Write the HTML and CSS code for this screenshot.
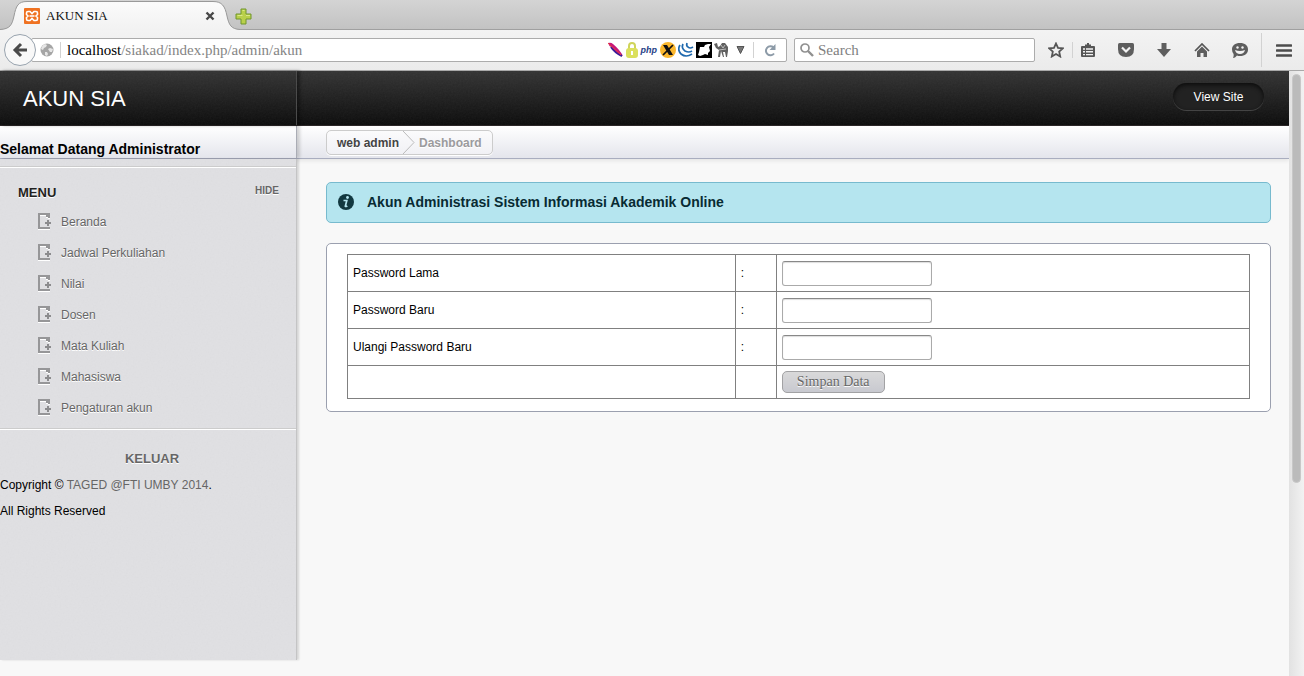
FILE: index.html
```
<!DOCTYPE html>
<html lang="id">
<head>
<meta charset="utf-8">
<title>AKUN SIA</title>
<link rel="stylesheet" href="styles.css">
</head>
<body>
<svg class="defs" width="0" height="0" aria-hidden="true">
  <symbol id="page-add" viewBox="0 0 14 17">
    <path d="M0 1h12v5h-2V5H8V3H2v12h10v2H0z" fill="#fff"/>
    <path d="M0 0h12v5h-2V4H8V2H2v12h10v2H0z" fill="#969698"/>
    <path d="M9 7h2v2h2v2h-2v2H9v-2H7V9h2z" fill="#8c8c8e"/>
  </symbol>
</svg>

<div class="tabstrip">
  <div class="tab">
    <svg class="tab-shape" viewBox="0 0 240 30" preserveAspectRatio="none" aria-hidden="true">
      <defs><linearGradient id="tabfill" x1="0" y1="0" x2="0" y2="1"><stop offset="0" stop-color="#fbfbfb"/><stop offset="1" stop-color="#f2f2f2"/></linearGradient></defs>
      <path d="M0 29.500C10 29 12 25 14 16C16 6 18 1.500 27 1.500H213C222 1.500 225 6 227 16C229 25 231 29 240 29.500V30H0z" fill="url(#tabfill)"/>
      <path d="M0 29.500C10 29 12 25 14 16C16 6 18 1.500 27 1.500H213C222 1.500 225 6 227 16C229 25 231 29 240 29.500" fill="none" stroke="#999"/>
    </svg>
    <svg class="favicon" width="16" height="16" viewBox="0 0 16 16" aria-hidden="true">
      <rect width="16" height="16" rx="1" fill="#ef7222"/>
      <path d="M4 3.500h2l2 2 2-2h2q1.500 0 1.500 1.500v1.500L12 8l1.500 1.500V11q0 1.500-1.500 1.500h-2l-2-2-2 2H4Q2.500 12.500 2.500 11V9.500L4 8 2.500 6.500V5Q2.500 3.500 4 3.500z" fill="none" stroke="#fff" stroke-width="1.600"/>
      <path d="M5.500 8h5" stroke="#fff" stroke-width="1.600"/>
    </svg>
    <span class="tab-title">AKUN SIA</span>
    <button class="bare" aria-label="Close tab"><svg width="10" height="10" viewBox="0 0 10 10"><path d="M1.500 1.500l7 7m0-7l-7 7" stroke="#484848" stroke-width="2.400"/></svg></button>
  </div>
  <button class="bare" aria-label="New tab"><svg width="17" height="17" viewBox="0 0 17 17"><path d="M6 1h5v5h5v5h-5v5H6v-5H1V6h5z" fill="#b9d04a" stroke="#71962c"/><path d="M7.500 2.500h2M2.500 7.500h5M11 7.500h4" stroke="#dbe88a"/></svg></button>
</div>

<div class="toolbar">
  <button class="bare back" aria-label="Back"><svg width="16" height="16" viewBox="0 0 16 16"><path d="M9 2L3 8l6 6M3.500 8H15" fill="none" stroke="#4a4a4a" stroke-width="3"/></svg></button>
  <div class="urlbar">
    <svg width="14" height="14" viewBox="0 0 14 14" aria-hidden="true"><circle cx="7" cy="7" r="6.500" fill="#a5a5a5"/><path d="M1 6q1-4 4-5l2 1-1 2-2 1-1 2zM8 6l2-1 3 1-1 3-2 0zM5 9l2 0 1 2-1 2-2-1z" fill="#e6e6e6"/></svg>
    <span class="divider"></span>
    <span class="address"><b>localhost</b>/siakad/index.php/admin/akun</span>
    <span class="addons">
      <svg width="16" height="16" viewBox="0 0 16 16" aria-hidden="true"><path d="M0 1q3-1 5 1 7 6 10 12-8-3-12-9Q1 4 0 1z" fill="#c9177a"/><path d="M3 5q4 6 11 9" stroke="#3b1b98" stroke-width="2" fill="none"/><path d="M0 1l13 12" stroke="#e6403c"/></svg>
      <svg width="12" height="16" viewBox="0 0 12 16" aria-hidden="true"><path d="M3 8V4a3 3 0 0 1 6 0v4" fill="none" stroke="#cfd45b" stroke-width="2"/><rect y="6" width="12" height="10" rx="3" fill="#dbe05d"/><path d="M5 9h2v4H5z" fill="#fff"/></svg>
      <span class="php">php</span>
      <svg width="16" height="16" viewBox="0 0 16 16" aria-hidden="true"><circle cx="8" cy="8" r="8" fill="#fbb72d"/><path d="M3 3h4l6 10H9z" fill="#111"/><path d="M13 3L3 13" stroke="#111" stroke-width="1.700"/></svg>
      <svg width="16" height="16" viewBox="0 0 16 16" fill="none" stroke="#1f69ae" stroke-width="1.700" aria-hidden="true"><path d="M2 3q-3 5 1 9 5 4 11 0"/><path d="M5 2q-2 4 2 7 4 2 7 0"/><path d="M9 1q-1 3 1 4 2 2 5 0"/></svg>
      <svg width="16" height="16" viewBox="0 0 16 16" aria-hidden="true"><path d="M0 0h16v16H0z" fill="#000"/><path d="M4 5h4l1-2 3-1h3l-2 3 1 4-2 2v2l-3-1-2 1-3 1-2-1 1-3z" fill="#fff"/></svg>
      <svg width="15" height="16" viewBox="0 0 15 16" aria-hidden="true"><path d="M0 2l3-1 1 4 2-1 2-3 3 0 3 4v4l-1 6h-1l-1-5-2 0 1 5H9L7 9 6 15H4l1-7-3-2-1-2z" fill="#606060"/><path d="M7 3l2 3 2-3M5 8l7-1" stroke="#bbb" fill="none"/></svg>
      <svg width="9" height="8" viewBox="0 0 9 8" aria-hidden="true"><path d="M1 .5h7L4.500 7.500z" fill="#777" stroke="#555"/></svg>
    </span>
    <span class="divider"></span>
    <button class="bare reload" aria-label="Reload"><svg width="12" height="13" viewBox="0 0 12 13"><path d="M9.500 3.500A4.500 4.500 0 1 0 10 9.500" fill="none" stroke="#8d9ba8" stroke-width="2"/><path d="M11.500 0v6h-6z" fill="#8d9ba8"/></svg></button>
  </div>
  <label class="search">
    <svg width="14" height="14" viewBox="0 0 14 14" aria-hidden="true"><circle cx="5" cy="5" r="4" fill="none" stroke="#909090" stroke-width="1.700"/><path d="M8 8l5 5" stroke="#909090" stroke-width="2.400"/></svg>
    <input type="text" placeholder="Search" aria-label="Search">
  </label>
  <div class="tools">
    <button class="bare" aria-label="Bookmark"><svg width="16" height="16" viewBox="0 0 16 16"><path d="M8 1.500l2 4.400 4.800.5-3.600 3.200 1 4.900L8 12l-4.200 2.500 1-4.900L1.200 6.400 6 5.900z" fill="none" stroke="#555" stroke-width="1.800"/></svg></button>
    <span class="divider"></span>
    <button class="bare list" aria-label="Bookmarks list"><svg width="14" height="15" viewBox="0 0 14 15"><path d="M1 3h3V1.500h2V0h2v1.500h2V3h3q1 0 1 1v9q0 1-1 1H1q-1 0-1-1V4q0-1 1-1z" fill="#565656"/><path d="M2 6h2m1 0h7M2 8.800h2m1 0h7M2 11.600h2m1 0h7" stroke="#f2f2f2" stroke-width="1.400"/></svg></button>
    <button class="bare wide" aria-label="Pocket"><svg width="16" height="14" viewBox="0 0 16 14"><path d="M1.500 0h13Q16 0 16 1.500V6q0 8-8 8T0 6V1.500Q0 0 1.500 0z" fill="#5e5e5e"/><path d="M4 4.500l4 4 4-4" fill="none" stroke="#f4f4f4" stroke-width="2.200"/></svg></button>
    <button class="bare wide" aria-label="Downloads"><svg width="14" height="14" viewBox="0 0 14 14"><path d="M4.500 0h5v6H14l-7 8-7-8h4.500z" fill="#5e5e5e"/></svg></button>
    <button class="bare wide" aria-label="Home"><svg width="16" height="14" viewBox="0 0 16 14"><path d="M1 8l7-7 7 7" fill="none" stroke="#555" stroke-width="1.700"/><path d="M3 8.500l5-5 5 5V14H9.500v-4h-3v4H3z" fill="#5e5e5e"/></svg></button>
    <button class="bare wide" aria-label="Chat"><svg width="16" height="15" viewBox="0 0 16 15"><path d="M8 0c5 0 8 2.600 8 6.500S13 13 8 13q-2 0-3-.5Q3 15 1 15q1-2 .6-4Q0 9 0 6.500C0 2.600 3 0 8 0z" fill="#5e5e5e"/><circle cx="5.500" cy="4.500" r="1.200" fill="#f2f2f2"/><circle cx="10.500" cy="4.500" r="1.200" fill="#f2f2f2"/><path d="M3 7q5 2 10 0-1 4-5 4T3 7z" fill="#f2f2f2"/></svg></button>
    <span class="divider tall"></span>
    <button class="bare" aria-label="Menu"><svg width="16" height="13" viewBox="0 0 16 13"><path d="M1 1.500h14M1 6.500h14M1 11.500h14" stroke="#4c4c4c" stroke-width="2.600" stroke-linecap="round"/></svg></button>
  </div>
</div>

<div class="viewport">
  <div class="page">
    <header class="header">
      <h1 class="site-title">AKUN SIA</h1>
      <a class="view-site" href="#">View Site</a>
    </header>
    <div class="subbar">
      <div class="welcome">Selamat Datang Administrator</div>
      <nav class="breadcrumbs" aria-label="Breadcrumb">
        <a href="#">web admin</a>
        <svg width="12" height="23" viewBox="0 0 12 23" aria-hidden="true"><path d="M0 0l11 11.500L0 23" fill="none" stroke="#bbb"/></svg>
        <span>Dashboard</span>
      </nav>
    </div>
    <div class="columns">
      <aside class="sidebar">
        <div class="menu">
          <div class="menu-head"><h3>MENU</h3><a href="#">HIDE</a></div>
          <ul>
            <li><svg width="14" height="17"><use href="#page-add"/></svg><a href="#">Beranda</a></li>
            <li><svg width="14" height="17"><use href="#page-add"/></svg><a href="#">Jadwal Perkuliahan</a></li>
            <li><svg width="14" height="17"><use href="#page-add"/></svg><a href="#">Nilai</a></li>
            <li><svg width="14" height="17"><use href="#page-add"/></svg><a href="#">Dosen</a></li>
            <li><svg width="14" height="17"><use href="#page-add"/></svg><a href="#">Mata Kuliah</a></li>
            <li><svg width="14" height="17"><use href="#page-add"/></svg><a href="#">Mahasiswa</a></li>
            <li><svg width="14" height="17"><use href="#page-add"/></svg><a href="#">Pengaturan akun</a></li>
          </ul>
        </div>
        <footer>
          <a class="logout" href="#">KELUAR</a>
          <p>Copyright © <a href="#">TAGED @FTI UMBY 2014</a>.</p>
          <p>All Rights Reserved</p>
        </footer>
      </aside>
      <main class="main">
        <h4 class="alert">
          <svg width="16" height="16" viewBox="0 0 16 16" aria-hidden="true"><circle cx="8" cy="8" r="8" fill="#123840"/><circle cx="9.500" cy="3.500" r="1.400" fill="#b5e5ef"/><path d="M5.500 6.500h3.300L7.300 12.200q.6.800 2-.4" fill="none" stroke="#b5e5ef" stroke-width="1.700"/></svg>
          Akun Administrasi Sistem Informasi Akademik Online
        </h4>
        <form class="module">
          <table>
            <colgroup><col class="col-label"><col class="col-colon"><col></colgroup>
            <tr><td><label for="lama">Password Lama</label></td><td>:</td><td><input type="password" id="lama"></td></tr>
            <tr><td><label for="baru">Password Baru</label></td><td>:</td><td><input type="password" id="baru"></td></tr>
            <tr><td><label for="ulangi">Ulangi Password Baru</label></td><td>:</td><td><input type="password" id="ulangi"></td></tr>
            <tr><td></td><td></td><td><button type="button" class="save">Simpan Data</button></td></tr>
          </table>
        </form>
      </main>
    </div>
  </div>
  <div class="scrollbar" aria-hidden="true"><div class="thumb"></div></div>
</div>
</body>
</html>
```
FILE: styles.css
```
* { box-sizing: border-box; }
body {
  margin: 0;
  height: 100vh;
  display: flex;
  flex-direction: column;
  overflow: hidden;
  background: #f8f8f8;
  font: 12px/18px "Liberation Sans", Arial, sans-serif;
  color: #000;
}
a { color: #666; text-decoration: none; }
svg { display: block; flex: none; }
.defs { position: absolute; }
h1, h3, h4, p, ul { margin: 0; padding: 0; }
.bare { border: 0; padding: 0; background: none; display: flex; align-items: center; justify-content: center; }

/* Browser chrome */
.tabstrip {
  flex: none;
  height: 30px;
  display: flex;
  align-items: center;
  gap: 5px;
  padding-top: 2px;
  background: linear-gradient(#d4d4d4, #c2c2c2);
  box-shadow: inset 0 -1px #a0a0a0;
}
.tab {
  position: relative;
  width: 230px;
  height: 28px;
  display: flex;
  align-items: center;
  gap: 6px;
  padding: 0 15px 0 24px;
  font: 13px/20px "Liberation Serif", serif;
  color: #111;
}
.tab > * { position: relative; }
.tab > .tab-shape { position: absolute; left: 0; bottom: 0; width: 240px; height: 30px; }
.tab-title { flex: 1; }
.toolbar {
  flex: none;
  height: 41px;
  display: flex;
  align-items: center;
  padding: 0 12px 0 4px;
  background: linear-gradient(#f3f3f3, #ebebeb);
  border-bottom: 1px solid #a9a9a9;
  font: 15px/20px "Liberation Serif", serif;
}
.back {
  flex: none;
  width: 32px;
  height: 32px;
  z-index: 1;
  margin-right: -5px;
  border: 1px solid #98a3ae;
  border-radius: 50%;
  background: #f8f8f8;
}
.urlbar, .search {
  height: 24px;
  display: flex;
  align-items: center;
  background: #fff;
  border: 1px solid #acacac;
  border-radius: 2px;
}
.urlbar { flex: 1; min-width: 0; gap: 6px; padding: 0 6px 0 8px; }
.address { flex: 1; color: #858585; white-space: nowrap; overflow: hidden; }
.address b { font-weight: normal; color: #000; }
.divider { flex: none; width: 1px; height: 16px; background: #d2d2d2; }
.divider.tall { height: 34px; }
.addons { display: flex; align-items: center; gap: 2px; margin-right: 2px; }
.addons svg:last-child { margin-left: 5px; }
.php { margin: 0 1px; font: italic bold 9px/12px "Liberation Sans", Arial, sans-serif; color: #1f3f86; }
.reload { width: 20px; height: 20px; }
.search { flex: none; width: 241px; gap: 4px; margin-left: 7px; padding: 0 5px; }
.search input {
  flex: 1;
  min-width: 0;
  border: 0;
  padding: 0;
  background: none;
  font: inherit;
}
.search input::placeholder { color: #808080; opacity: 1; }
.tools { display: flex; align-items: center; gap: 8px; margin-left: 13px; }
.tools .list { margin-right: 8px; }
.tools .wide { width: 30px; }
.tools .divider.tall { margin: 0 6px 0 -2px; }
.tools .bare { height: 24px; }

/* Page and scrollbar */
.viewport { flex: 1; min-height: 0; display: flex; }
.page { flex: 1; min-width: 0; display: flex; flex-direction: column; padding-bottom: 16px; }
.scrollbar { flex: none; width: 15px; padding: 3px 3px 0; background: linear-gradient(90deg, #e2e2e2, #f2f2f2); }
.thumb { width: 9px; height: 68%; border-radius: 5px; background: #bbb; border: 1px solid #c8c8c8; }

.header, .sidebar { position: relative; }
.header::before, .sidebar::before {
  content: "";
  position: absolute;
  inset: 0;
  background: url("data:image/svg+xml,%3Csvg xmlns='http://www.w3.org/2000/svg' width='100' height='100'%3E%3Cfilter id='n'%3E%3CfeTurbulence type='fractalNoise' baseFrequency='.6' numOctaves='2' stitchTiles='stitch'/%3E%3CfeColorMatrix type='saturate' values='0'/%3E%3C/filter%3E%3Crect width='100' height='100' filter='url(%23n)'/%3E%3C/svg%3E");
  opacity: .06;
  pointer-events: none;
}
.header {
  display: flex;
  align-items: stretch;
  justify-content: space-between;
  height: 55px;
  padding-right: 25px;
  background: linear-gradient(#333, #0b0b0b);
  border-bottom: 1px solid #2c2728;
}
.site-title {
  width: 297px;
  padding-left: 23px;
  border-right: 1px solid #484848;
  box-shadow: 3px 0 3px rgba(0, 0, 0, .45);
  font-size: 22px;
  font-weight: normal;
  line-height: 55px;
  color: #fff;
}
.view-site {
  align-self: flex-start;
  position: relative;
  width: 91px;
  height: 27px;
  margin-top: 12px;
  border-radius: 14px;
  background: #222;
  box-shadow: inset 0 2px 4px #0c0c0c, 0 1px #444;
  text-align: center;
  line-height: 29px;
  color: #fff;
}
.subbar {
  display: flex;
  height: 33px;
  background: linear-gradient(#fff, #e4e5ec);
  border-bottom: 1px solid #a9adbf;
  box-shadow: 0 2px 4px rgba(0, 0, 0, .08);
}
.welcome {
  flex: none;
  width: 297px;
  border-right: 1px solid #aaacb5;
  box-shadow: 3px 0 3px rgba(0, 0, 0, .16);
  font-size: 14px;
  font-weight: bold;
  line-height: 46px;
}
.breadcrumbs {
  align-self: flex-start;
  display: flex;
  align-items: center;
  gap: 4px;
  height: 25px;
  margin: 4px 0 0 29px;
  padding: 0 10px;
  border: 1px solid #ccc;
  border-radius: 5px;
  background: linear-gradient(#fbfbfc, #f1f1f5);
  box-shadow: 0 1px #fff;
  font-weight: bold;
  color: #9b9b9d;
  text-shadow: 0 1px #fff;
}
.breadcrumbs a { color: #444; }

.columns { flex: 1; display: flex; }
.sidebar {
  flex: none;
  width: 297px;
  background: #e0e0e3;
  border-right: 1px solid #c4c4c5;
  box-shadow: 2px 0 2px rgba(0, 0, 0, .14);
  text-shadow: 0 1px #fff;
}
.sidebar > * { position: relative; }
.menu {
  margin-top: 7px;
  padding: 17px 17px 5px 18px;
  border-top: 1px solid #ccc;
  border-bottom: 1px solid #ccc;
  box-shadow: inset 0 1px #fff, 0 1px #fff;
}
.menu-head { display: flex; justify-content: space-between; }
.menu-head h3 { font-size: 13px; line-height: 18px; color: #1f1f20; }
.menu-head a { font-size: 10px; font-weight: bold; line-height: 14px; }
.menu ul { list-style: none; padding: 4px 0 0 20px; }
.menu li { display: flex; align-items: center; gap: 9px; height: 31px; }
.sidebar footer { padding-top: 21px; }
.logout { display: block; margin-left: 8px; text-align: center; font-size: 13px; font-weight: bold; }
.sidebar footer p { margin-top: 8px; text-shadow: none; }

.main { flex: 1; min-width: 0; padding: 23px 18px 0 29px; }
.alert {
  display: flex;
  align-items: center;
  gap: 13px;
  height: 41px;
  padding: 0 11px 2px;
  border: 1px solid #77bace;
  border-radius: 5px;
  background: #b5e5ef;
  font-size: 14px;
  color: #082b33;
}
.module {
  margin-top: 20px;
  padding: 10px 20px 12px;
  border: 1px solid #9ba0af;
  border-radius: 5px;
  background: #fff;
}
table { width: 100%; table-layout: fixed; border-collapse: collapse; }
.col-label { width: 43%; }
.col-colon { width: 41px; }
td { height: 37px; padding: 0 5px; border: 1px solid gray; }
tr:last-child td { height: 33px; }
td input {
  display: block;
  width: 150px;
  height: 25px;
  border: 1px solid #aaa;
  border-top-color: #888;
  border-radius: 3px;
  background: #fff;
  box-shadow: inset 0 1px 1px #ddd;
}
.save {
  display: block;
  height: 22px;
  padding: 0 14px;
  border: 1px solid #a2a2a4;
  border-radius: 5px;
  background: linear-gradient(#d9d9da, #c8c9d0);
  font: 14px/18px "Liberation Serif", serif;
  color: #666;
  text-shadow: 0 1px #fff;
}
```
